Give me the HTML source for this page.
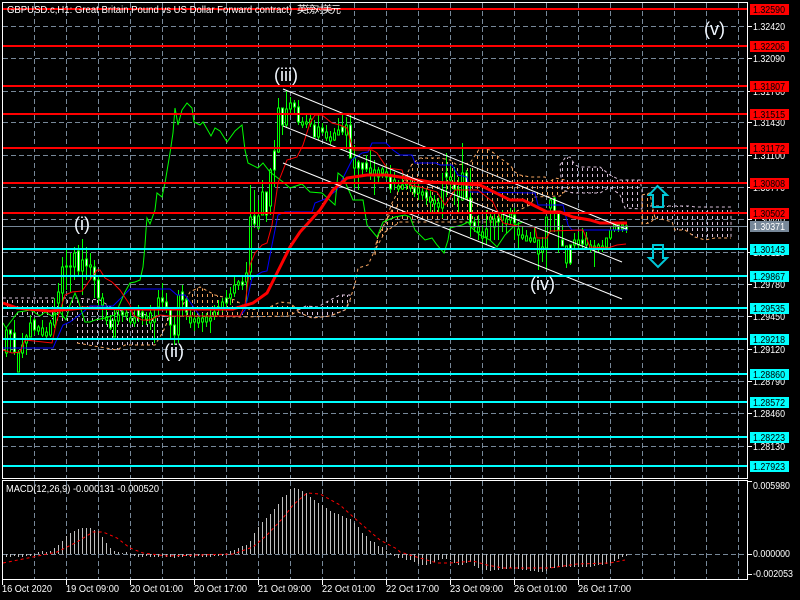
<!DOCTYPE html>
<html>
<head>
<meta charset="utf-8">
<title>GBPUSD.c H1</title>
<style>
html,body{margin:0;padding:0;background:#000;width:800px;height:600px;overflow:hidden}
svg{display:block;position:absolute;left:0;top:0}
text{font-family:"Liberation Sans","Noto Sans CJK SC",sans-serif;font-size:10px;fill:#fff}
.w{font-size:18px;fill:#f2f8ff}
.b{fill:#000}
</style>
</head>
<body>
<svg width="800" height="600" viewBox="0 0 800 600" xmlns="http://www.w3.org/2000/svg">
<defs>
<pattern id="ho" width="5" height="6" patternUnits="userSpaceOnUse"><rect x="2" y="0" width="1" height="3" fill="#f4a460"/></pattern>
<pattern id="ht" width="5" height="6" patternUnits="userSpaceOnUse"><rect x="2" y="0" width="1" height="3" fill="#d8bfd8"/></pattern>
</defs>
<rect width="800" height="600" fill="#000"/>

<!-- grid -->
<g fill="none" stroke="#778899" stroke-width="1" stroke-dasharray="5 3" shape-rendering="crispEdges">
<path d="M34.5 3V478M66.5 3V478M98.5 3V478M130.5 3V478M162.5 3V478M194.5 3V478M226.5 3V478M258.5 3V478M290.5 3V478M322.5 3V478M354.5 3V478M386.5 3V478M418.5 3V478M450.5 3V478M482.5 3V478M514.5 3V478M546.5 3V478M578.5 3V478M610.5 3V478M642.5 3V478M674.5 3V478M706.5 3V478M738.5 3V478"/>
<path d="M34.5 481V579M66.5 481V579M98.5 481V579M130.5 481V579M162.5 481V579M194.5 481V579M226.5 481V579M258.5 481V579M290.5 481V579M322.5 481V579M354.5 481V579M386.5 481V579M418.5 481V579M450.5 481V579M482.5 481V579M514.5 481V579M546.5 481V579M578.5 481V579M610.5 481V579M642.5 481V579M674.5 481V579M706.5 481V579M738.5 481V579"/>
<path d="M3 26.5H747M3 58.5H747M3 91.5H747M3 122.5H747M3 155.5H747M3 187.5H747M3 219.5H747M3 252.5H747M3 284.5H747M3 316.5H747M3 349.5H747M3 381.5H747M3 413.5H747M3 446.5H747M3 554.5H747"/>
</g>

<!-- cloud -->
<g stroke-width="1" stroke-dasharray="3 3">
<path fill="url(#ht)" stroke="none" d="M3 298H75L100 300L112 308L125 312L155 316L170 316L165 330L155 345L125 345L117 350L77 343L75 325L40 316L3 316Z"/>
<path fill="none" stroke="#d8bfd8" d="M3 298H75L100 300L112 308L125 312L155 316L170 316"/>
<path fill="none" stroke="#f4a460" d="M77 343L100 347L117 350L125 345L155 345L163 332L170 315"/>
<path fill="url(#ho)" stroke="#f4a460" d="M180 310L190 292L200 287L215 295L235 300L250 310L270 307L280 302L290 303L298 310L290 316L240 317L200 316L178 316Z"/>
<path fill="url(#ht)" stroke="#d8bfd8" d="M298 310L306 306L318 307L330 300L340 295L350 295L350 302L345 310L330 316L312 318L298 312Z"/>
<path fill="none" stroke="#f4a460" d="M298 312L312 318L330 316L345 310L350 300L356 280L358 268L368 265L374 252L378 236L384 225L392 210L400 205"/>
<path fill="url(#ho)" stroke="#f4a460" d="M375 255L378 236L384 225L392 203L400 188L406 176L412 164L420 158L440 158L450 160L457 165L470 163L480 148L490 150L500 158L510 165L515 172L520 175L530 177L545 177L548 183L555 178L565 180L570 187L560 196L535 197L530 205L515 212L500 222L480 222L440 222L400 222L385 232L375 250Z"/>
<path fill="url(#ht)" stroke="#d8bfd8" d="M560 165L565 158L570 157L575 165L580 167L600 167L610 175L620 180L640 180L642 190L642 209L625 208L620 195L610 187L600 193L573 193L562 190Z"/>
<path fill="url(#ho)" stroke="#f4a460" d="M642 195L650 193L652 205L655 218L650 223L642 224Z"/>
<path fill="url(#ht)" stroke="none" d="M650 206H690L695 207H731V238H725L715 238L705 240L695 237L685 230L675 230L672 222L665 220L655 218Z"/>
<path fill="none" stroke="#d8bfd8" d="M650 206H690L695 207H731V238"/>
<path fill="none" stroke="#f4a460" d="M655 218L665 220L672 222L675 230L685 230L695 237L705 240L715 238L731 238"/>
</g>

<!-- candle wicks -->
<path fill="none" stroke="#00ff00" stroke-width="1" shape-rendering="crispEdges" d="M6.5 327V357M10.5 330V353M14.5 320V355M18.5 350V372M22.5 333V358M26.5 334V355M30.5 315V337M34.5 318V335M38.5 325V335M42.5 320V337M46.5 327V338M50.5 320V337M54.5 298V328M58.5 283V308M62.5 257V318M66.5 250V290M70.5 253V292M74.5 247V280M78.5 245V275M82.5 239V295M86.5 247V280M90.5 253V280M94.5 260V298M98.5 275V310M102.5 293V320M106.5 305V325M110.5 315V330M114.5 310V337M118.5 310V325M122.5 308V322M126.5 310V320M130.5 312V325M134.5 308V327M138.5 305V322M142.5 310V325M146.5 312V325M150.5 305V330M154.5 310V343M158.5 290V315M162.5 283V310M166.5 293V313M170.5 308V338M174.5 317V345M178.5 290V343M182.5 285V317M186.5 298V320M190.5 310V328M194.5 312V331M198.5 313V328M202.5 313V332M206.5 313V327M210.5 310V333M214.5 305V320M218.5 300V315M222.5 298V312M226.5 290V307M230.5 287V305M234.5 275V297M238.5 280V290M242.5 275V290M246.5 262V303M250.5 185V280M254.5 190V228M258.5 200V230M262.5 180V215M266.5 192V222M270.5 168V215M274.5 140V187M278.5 98V153M282.5 108V135M286.5 90V128M290.5 97V115M294.5 100V115M298.5 100V125M302.5 117V128M306.5 115V128M310.5 113V127M314.5 120V137M318.5 115V140M322.5 123V134M326.5 125V141M330.5 131V145M334.5 128V141M338.5 118V135M342.5 115V135M346.5 117V150M350.5 115V158M354.5 145V188M358.5 160V190M362.5 163V176M366.5 155V172M370.5 150V180M374.5 160V195M378.5 167V182M382.5 167V178M386.5 165V180M390.5 165V193M394.5 172V190M398.5 180V192M402.5 175V190M406.5 178V190M410.5 180V192M414.5 180V197M418.5 182V200M422.5 188V200M426.5 188V205M430.5 190V212M434.5 195V212M438.5 198V212M442.5 173V218M446.5 153V197M450.5 165V190M454.5 167V205M458.5 177V212M462.5 143V200M466.5 170V200M470.5 168V237M474.5 217V232M478.5 215V240M482.5 225V245M486.5 210V245M490.5 214V240M494.5 214V240M498.5 214V240M502.5 210V232M506.5 215V233M510.5 208V225M514.5 208V240M518.5 222V248M522.5 226V240M526.5 230V240M530.5 232V243M534.5 228V243M538.5 240V270M542.5 237V262M546.5 217V270M550.5 198V232M554.5 197V232M558.5 213V253M562.5 225V245M566.5 246V268M570.5 245V265M574.5 233V250M578.5 232V250M582.5 228V248M586.5 232V248M590.5 240V252M594.5 240V267M598.5 243V252M602.5 240V252M606.5 238V250M610.5 228V240M614.5 224V232M618.5 224V232M622.5 224V232M626.5 223V233"/>
<!-- black bodies -->
<path fill="#000" stroke="#00ff00" stroke-width="1" shape-rendering="crispEdges" d="M5.5 330h2V353h-2zM17.5 353h2V372h-2zM21.5 345h2V353h-2zM25.5 336h2V343h-2zM29.5 323h2V337h-2zM37.5 327h2V331h-2zM41.5 328h2V335h-2zM45.5 332h2V336h-2zM49.5 323h2V335h-2zM53.5 313h2V325h-2zM57.5 292h2V303h-2zM61.5 267h2V293h-2zM65.5 266h2V267h-2zM69.5 266h2V267h-2zM73.5 253h2V267h-2zM81.5 260h2V271h-2zM89.5 265h2V267h-2zM101.5 298h2V305h-2zM105.5 317h2V320h-2zM113.5 320h2V337h-2zM117.5 315h2V321h-2zM125.5 313h2V316h-2zM129.5 318h2V322h-2zM133.5 318h2V323h-2zM145.5 316h2V319h-2zM149.5 313h2V323h-2zM153.5 317h2V322h-2zM157.5 298h2V307h-2zM177.5 295h2V335h-2zM189.5 317h2V323h-2zM193.5 319h2V322h-2zM197.5 318h2V323h-2zM201.5 318h2V322h-2zM205.5 317h2V322h-2zM209.5 318h2V321h-2zM213.5 312h2V316h-2zM221.5 302h2V308h-2zM229.5 294h2V298h-2zM233.5 285h2V293h-2zM237.5 282h2V285h-2zM245.5 273h2V282h-2zM249.5 217h2V272h-2zM257.5 216h2V228h-2zM261.5 192h2V215h-2zM269.5 170h2V206h-2zM277.5 108h2V152h-2zM285.5 109h2V125h-2zM289.5 103h2V109h-2zM301.5 122h2V125h-2zM305.5 122h2V124h-2zM309.5 119h2V124h-2zM317.5 127h2V137h-2zM325.5 132h2V138h-2zM329.5 137h2V141h-2zM333.5 133h2V140h-2zM337.5 130h2V135h-2zM345.5 125h2V135h-2zM353.5 158h2V168h-2zM369.5 168h2V173h-2zM373.5 170h2V175h-2zM377.5 170h2V177h-2zM381.5 169h2V173h-2zM385.5 172h2V177h-2zM393.5 180h2V183h-2zM397.5 186h2V189h-2zM401.5 185h2V189h-2zM405.5 183h2V185h-2zM409.5 185h2V188h-2zM417.5 188h2V193h-2zM421.5 192h2V195h-2zM429.5 197h2V202h-2zM433.5 200h2V204h-2zM437.5 203h2V207h-2zM441.5 190h2V208h-2zM449.5 177h2V180h-2zM457.5 189h2V197h-2zM461.5 173h2V200h-2zM477.5 227h2V232h-2zM481.5 232h2V238h-2zM485.5 229h2V237h-2zM489.5 217h2V220h-2zM493.5 219h2V227h-2zM501.5 214h2V220h-2zM505.5 219h2V224h-2zM509.5 214h2V220h-2zM517.5 229h2V235h-2zM521.5 235h2V238h-2zM525.5 236h2V241h-2zM529.5 238h2V241h-2zM533.5 238h2V242h-2zM537.5 240h2V254h-2zM541.5 247h2V252h-2zM545.5 217h2V248h-2zM549.5 200h2V208h-2zM565.5 246h2V263h-2zM573.5 240h2V245h-2zM577.5 240h2V245h-2zM585.5 238h2V245h-2zM589.5 245h2V249h-2zM593.5 246h2V248h-2zM597.5 245h2V248h-2zM601.5 246h2V248h-2zM605.5 238h2V247h-2zM609.5 230h2V238h-2zM613.5 225h2V230h-2zM621.5 225h2V229h-2z"/>
<!-- white bodies -->
<path fill="#fff" stroke="#00ff00" stroke-width="1" shape-rendering="crispEdges" d="M9.5 330h2V334h-2zM13.5 333h2V352h-2zM33.5 320h2V330h-2zM77.5 251h2V271h-2zM85.5 259h2V266h-2zM93.5 267h2V280h-2zM97.5 280h2V298h-2zM109.5 320h2V328h-2zM121.5 312h2V315h-2zM137.5 310h2V316h-2zM141.5 312h2V317h-2zM161.5 298h2V302h-2zM165.5 302h2V307h-2zM169.5 310h2V325h-2zM173.5 325h2V335h-2zM181.5 292h2V300h-2zM185.5 300h2V312h-2zM217.5 307h2V310h-2zM225.5 298h2V303h-2zM241.5 282h2V285h-2zM253.5 216h2V224h-2zM265.5 192h2V215h-2zM273.5 151h2V170h-2zM281.5 108h2V125h-2zM293.5 103h2V107h-2zM297.5 107h2V122h-2zM313.5 125h2V137h-2zM321.5 128h2V132h-2zM341.5 127h2V132h-2zM349.5 125h2V158h-2zM357.5 162h2V168h-2zM361.5 163h2V169h-2zM365.5 163h2V169h-2zM389.5 177h2V189h-2zM413.5 188h2V193h-2zM425.5 192h2V198h-2zM445.5 173h2V177h-2zM453.5 183h2V189h-2zM465.5 173h2V198h-2zM469.5 198h2V223h-2zM473.5 222h2V227h-2zM497.5 218h2V222h-2zM513.5 215h2V223h-2zM553.5 198h2V212h-2zM557.5 213h2V230h-2zM561.5 240h2V246h-2zM569.5 245h2V263h-2zM581.5 240h2V244h-2zM617.5 225h2V230h-2zM625.5 226h2V230h-2z"/>

<!-- ichimoku lines -->
<polyline fill="none" stroke="#0000ff" stroke-width="1" points="3,348 53,348 63,325 70,322 82,313 90,306 113,306 130,289 170,289 177,295 185,295 200,316 240,316 245,310 252,278 262,272 267,271 272,245 278,215 285,212 312,212 315,203 325,199 337,190 352,160 362,153 368,152 372,143 386,143 393,150 400,155 412,155 415,163 436,163 440,165 452,165 458,175 467,177 470,192 535,193 538,205 563,205 568,225 572,230 628,230"/>
<polyline fill="none" stroke="#00ff00" stroke-width="1" points="3,323 6,328 12,320 18,312 25,311 30,310 34,312 40,316 45,312 52,316 60,312 66,320 70,305 75,293 78,300 85,322 90,322 95,320 105,318 115,315 125,292 130,283 135,282 140,280 143,267 145,245 146,230 147,218 150,224 155,210 157,193 162,197 165,183 170,153 173,133 175,108 178,125 182,110 187,103 192,108 194,122 200,125 203,122 211,136 215,128 220,131 227,142 235,131 242,125 245,150 248,163 258,168 263,163 270,172 283,182 290,188 302,184 310,192 322,193 335,205 338,173 343,177 353,200 363,200 367,225 377,237 383,222 395,217 405,215 410,217 415,230 425,240 432,238 437,245 444,253 448,240 450,228 462,225 468,222 472,228 480,235 490,240 497,247 505,235 515,225 523,222"/>
<polyline fill="none" stroke="#ff0000" stroke-width="1" points="3,350 12,353 20,352 25,340 52,343 57,320 65,295 72,292 82,291 90,280 97,270 100,270 105,278 112,282 120,290 130,305 133,315 142,320 150,320 160,315 170,316 240,316 245,305 250,265 255,253 262,245 267,243 272,225 278,183 287,160 297,157 303,145 310,123 315,115 322,115 332,123 340,125 347,128 353,150 372,150 377,153 387,168 402,170 405,180 410,185 420,187 437,192 445,205 455,190 478,190 493,202 503,223 517,226 535,227 537,238 547,238 550,231 583,230 590,247 608,248 617,245 626,244"/>
<polyline fill="none" stroke="#ff0000" stroke-width="3" points="3,303 17,308 50,311 83,308 133,309 233,309 253,303 267,293 277,273 290,247 300,232 320,210 333,190 347,178 367,175 387,175 400,177 430,182 450,183 480,185 490,190 510,200 523,200 533,205 547,212 560,212 573,217 590,220 600,223 627,223"/>

<!-- channels -->
<g stroke="#fff" stroke-width="1" fill="none">
<path d="M283 89L626 229"/>
<path d="M283 126L622 262"/>
<path d="M283 163L622 299"/>
</g>

<!-- current price line -->
<path d="M3 226.5H747" stroke="#778899" stroke-width="1" shape-rendering="crispEdges"/>

<!-- horizontal levels -->
<g stroke="#ff0000" stroke-width="2" shape-rendering="crispEdges">
<path d="M3 9H747M3 46H747M3 86H747M3 114H747M3 148H747M3 183H747M3 213H747"/>
</g>
<g stroke="#00ffff" stroke-width="2" shape-rendering="crispEdges">
<path d="M3 249H747M3 276H747M3 308H747M3 339H747M3 374H747M3 402H747M3 437H747M3 466H747"/>
</g>

<!-- arrows -->
<g fill="none" stroke="#00c8d8" stroke-width="2">
<path d="M657.5 186L667 195H663V207H653V195H649Z"/>
<path d="M653 245H663V258H667L658 267L649 258H653Z"/>
</g>

<!-- title -->
<text x="7" y="13" textLength="285" lengthAdjust="spacingAndGlyphs">GBPUSD.c,H1:  Great Britain Pound vs US Dollar Forward contract)</text>
<text x="297" y="13" textLength="44">英镑对美元</text>

<!-- wave labels -->
<text class="w" x="274" y="81">(iii)</text>
<text class="w" x="74" y="230">(i)</text>
<text class="w" x="164" y="357">(ii)</text>
<text class="w" x="530" y="290">(iv)</text>
<text class="w" x="704" y="35">(v)</text>

<!-- macd -->
<path fill="none" stroke="#c0c0c0" stroke-width="1" shape-rendering="crispEdges" d="M6.5 554V557M10.5 554V557M14.5 554V556M18.5 554V557M22.5 554V557M26.5 554V556M30.5 554V556M34.5 554V556M38.5 554V552M42.5 554V551M46.5 554V552M50.5 554V551M54.5 554V548M58.5 554V545M62.5 554V541M66.5 554V536M70.5 554V533M74.5 554V531M78.5 554V529M82.5 554V528M86.5 554V528M90.5 554V528M94.5 554V530M98.5 554V531M102.5 554V537M106.5 554V543M110.5 554V548M114.5 554V551M118.5 554V552M122.5 554V553M126.5 554V552M130.5 554V556M134.5 554V556M138.5 554V557M142.5 554V557M146.5 554V556M150.5 554V557M154.5 554V557M158.5 554V557M162.5 554V556M166.5 554V557M170.5 554V557M174.5 554V558M178.5 554V557M182.5 554V557M186.5 554V556M190.5 554V557M194.5 554V557M198.5 554V556M202.5 554V557M206.5 554V557M210.5 554V557M214.5 554V556M218.5 554V556M222.5 554V556M226.5 554V555M230.5 554V551M234.5 554V550M238.5 554V548M242.5 554V546M246.5 554V545M250.5 554V541M254.5 554V533M258.5 554V527M262.5 554V522M266.5 554V518M270.5 554V514M274.5 554V509M278.5 554V504M282.5 554V497M286.5 554V495M290.5 554V489M294.5 554V488M298.5 554V489M302.5 554V491M306.5 554V493M310.5 554V497M314.5 554V500M318.5 554V503M322.5 554V505M326.5 554V508M330.5 554V511M334.5 554V513M338.5 554V514M342.5 554V516M346.5 554V518M350.5 554V519M354.5 554V523M358.5 554V527M362.5 554V533M366.5 554V536M370.5 554V541M374.5 554V542M378.5 554V546M382.5 554V547M386.5 554V551M390.5 554V553M394.5 554V556M398.5 554V558M402.5 554V558M406.5 554V560M410.5 554V560M414.5 554V562M418.5 554V564M422.5 554V565M426.5 554V565M430.5 554V564M434.5 554V562M438.5 554V560M442.5 554V559M446.5 554V559M450.5 554V560M454.5 554V563M458.5 554V565M462.5 554V565M466.5 554V563M470.5 554V562M474.5 554V566M478.5 554V568M482.5 554V570M486.5 554V570M490.5 554V571M494.5 554V570M498.5 554V570M502.5 554V569M506.5 554V569M510.5 554V568M514.5 554V569M518.5 554V569M522.5 554V570M526.5 554V570M530.5 554V571M534.5 554V571M538.5 554V572M542.5 554V572M546.5 554V571M550.5 554V568M554.5 554V568M558.5 554V567M562.5 554V567M566.5 554V567M570.5 554V567M574.5 554V567M578.5 554V567M582.5 554V567M586.5 554V567M590.5 554V567M594.5 554V566M598.5 554V565M602.5 554V565M606.5 554V564M610.5 554V563M614.5 554V561M618.5 554V559M622.5 554V557M626.5 554V556"/>
<polyline fill="none" stroke="#ff0000" stroke-width="1" stroke-dasharray="3 3" points="3,563 33,557 57,552 77,542 93,532 103,532 117,538 130,548 143,553 167,556 233,554 253,547 267,535 283,518 293,505 307,493 320,494 340,505 360,523 380,540 397,549 400,552 420,558 437,563 450,563 473,561 487,565 503,568 533,568 550,568 577,564 610,563 625,560"/>
<text x="6" y="492" textLength="153" lengthAdjust="spacingAndGlyphs">MACD(12,26,9) -0.000131 -0.000520</text>

<!-- frame -->
<g fill="none" stroke="#fff" stroke-width="1" shape-rendering="crispEdges">
<path d="M2.5 2.5H747.5V478.5H2.5Z"/>
<path d="M2.5 480.5H747.5V579.5H2.5Z"/>
<path d="M748 26.5h4M748 58.5h4M748 91.5h4M748 122.5h4M748 155.5h4M748 187.5h4M748 219.5h4M748 252.5h4M748 284.5h4M748 316.5h4M748 349.5h4M748 381.5h4M748 413.5h4M748 446.5h4M748 481.5h4M748 554.5h4M748 574.5h4"/>
<path d="M2.5 580v5M66.5 580v5M130.5 580v5M194.5 580v5M258.5 580v5M322.5 580v5M386.5 580v5M450.5 580v5M514.5 580v5M578.5 580v5"/>
</g>

<!-- price axis -->
<g>
<text x="753" y="30" textLength="32" lengthAdjust="spacingAndGlyphs">1.32420</text>
<text x="753" y="62" textLength="32" lengthAdjust="spacingAndGlyphs">1.32090</text>
<text x="753" y="95" textLength="32" lengthAdjust="spacingAndGlyphs">1.31760</text>
<text x="753" y="126" textLength="32" lengthAdjust="spacingAndGlyphs">1.31430</text>
<text x="753" y="159" textLength="32" lengthAdjust="spacingAndGlyphs">1.31100</text>
<text x="753" y="191" textLength="32" lengthAdjust="spacingAndGlyphs">1.30770</text>
<text x="753" y="223" textLength="32" lengthAdjust="spacingAndGlyphs">1.30440</text>
<text x="753" y="256" textLength="32" lengthAdjust="spacingAndGlyphs">1.30110</text>
<text x="753" y="288" textLength="32" lengthAdjust="spacingAndGlyphs">1.29780</text>
<text x="753" y="320" textLength="32" lengthAdjust="spacingAndGlyphs">1.29450</text>
<text x="753" y="353" textLength="32" lengthAdjust="spacingAndGlyphs">1.29120</text>
<text x="753" y="385" textLength="32" lengthAdjust="spacingAndGlyphs">1.28790</text>
<text x="753" y="417" textLength="32" lengthAdjust="spacingAndGlyphs">1.28460</text>
<text x="753" y="450" textLength="32" lengthAdjust="spacingAndGlyphs">1.28130</text>
<text x="753" y="489" textLength="37" lengthAdjust="spacingAndGlyphs">0.005980</text>
<text x="753" y="557" textLength="37" lengthAdjust="spacingAndGlyphs">0.000000</text>
<text x="753" y="577" textLength="40" lengthAdjust="spacingAndGlyphs">-0.002053</text>
</g>

<!-- price tags -->
<g fill="#ff0000" shape-rendering="crispEdges">
<rect x="750" y="4" width="39" height="11"/>
<rect x="750" y="41" width="39" height="11"/>
<rect x="750" y="81" width="39" height="11"/>
<rect x="750" y="109" width="39" height="11"/>
<rect x="750" y="143" width="39" height="11"/>
<rect x="750" y="178" width="39" height="11"/>
<rect x="750" y="208" width="39" height="11"/>
</g>
<rect x="750" y="221" width="39" height="11" fill="#778899" shape-rendering="crispEdges"/>
<g fill="#00ffff" shape-rendering="crispEdges">
<rect x="750" y="244" width="39" height="11"/>
<rect x="750" y="271" width="39" height="11"/>
<rect x="750" y="303" width="39" height="11"/>
<rect x="750" y="334" width="39" height="11"/>
<rect x="750" y="369" width="39" height="11"/>
<rect x="750" y="397" width="39" height="11"/>
<rect x="750" y="432" width="39" height="11"/>
<rect x="750" y="461" width="39" height="11"/>
</g>
<text class="b" x="753" y="13" textLength="32" lengthAdjust="spacingAndGlyphs">1.32590</text>
<text class="b" x="753" y="50" textLength="32" lengthAdjust="spacingAndGlyphs">1.32206</text>
<text class="b" x="753" y="90" textLength="32" lengthAdjust="spacingAndGlyphs">1.31807</text>
<text class="b" x="753" y="118" textLength="32" lengthAdjust="spacingAndGlyphs">1.31515</text>
<text class="b" x="753" y="152" textLength="32" lengthAdjust="spacingAndGlyphs">1.31172</text>
<text class="b" x="753" y="187" textLength="32" lengthAdjust="spacingAndGlyphs">1.30808</text>
<text class="b" x="753" y="217" textLength="32" lengthAdjust="spacingAndGlyphs">1.30502</text>
<text x="753" y="230" textLength="32" lengthAdjust="spacingAndGlyphs">1.30371</text>
<text class="b" x="753" y="253" textLength="32" lengthAdjust="spacingAndGlyphs">1.30143</text>
<text class="b" x="753" y="280" textLength="32" lengthAdjust="spacingAndGlyphs">1.29867</text>
<text class="b" x="753" y="312" textLength="32" lengthAdjust="spacingAndGlyphs">1.29535</text>
<text class="b" x="753" y="343" textLength="32" lengthAdjust="spacingAndGlyphs">1.29218</text>
<text class="b" x="753" y="378" textLength="32" lengthAdjust="spacingAndGlyphs">1.28860</text>
<text class="b" x="753" y="406" textLength="32" lengthAdjust="spacingAndGlyphs">1.28572</text>
<text class="b" x="753" y="441" textLength="32" lengthAdjust="spacingAndGlyphs">1.28223</text>
<text class="b" x="753" y="470" textLength="32" lengthAdjust="spacingAndGlyphs">1.27923</text>

<!-- time axis -->
<text x="2" y="592" textLength="50" lengthAdjust="spacingAndGlyphs">16 Oct 2020</text>
<text x="66" y="592" textLength="53" lengthAdjust="spacingAndGlyphs">19 Oct 09:00</text>
<text x="130" y="592" textLength="53" lengthAdjust="spacingAndGlyphs">20 Oct 01:00</text>
<text x="194" y="592" textLength="53" lengthAdjust="spacingAndGlyphs">20 Oct 17:00</text>
<text x="258" y="592" textLength="53" lengthAdjust="spacingAndGlyphs">21 Oct 09:00</text>
<text x="322" y="592" textLength="53" lengthAdjust="spacingAndGlyphs">22 Oct 01:00</text>
<text x="386" y="592" textLength="53" lengthAdjust="spacingAndGlyphs">22 Oct 17:00</text>
<text x="450" y="592" textLength="53" lengthAdjust="spacingAndGlyphs">23 Oct 09:00</text>
<text x="514" y="592" textLength="53" lengthAdjust="spacingAndGlyphs">26 Oct 01:00</text>
<text x="578" y="592" textLength="53" lengthAdjust="spacingAndGlyphs">26 Oct 17:00</text>
</svg>
</body>
</html>
